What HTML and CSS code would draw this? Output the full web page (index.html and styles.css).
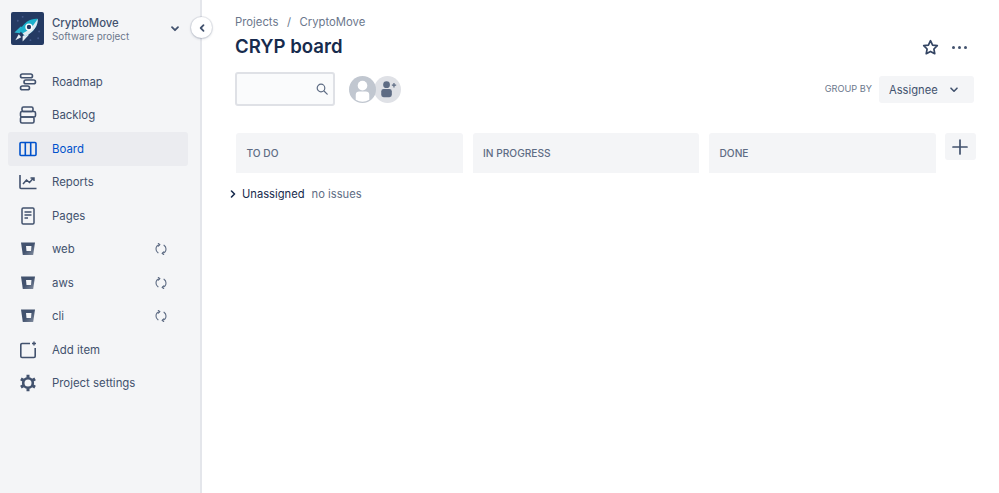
FILE: index.html
```html
<!DOCTYPE html>
<html lang="en">
<head>
  <meta charset="UTF-8" />
  <title>CRYP board</title>
  <link rel="stylesheet" href="styles.css">
</head>

<body>
  <div class="app">
    <aside class="sidebar">
      <div class="project">
        <svg class="project-logo" viewBox="0 0 34 34">
          <rect width="34" height="34" rx="2" fill="#243a63"/>
          <circle cx="7" cy="9" r="1" fill="#44598a"/>
          <circle cx="12" cy="5" r="1" fill="#44598a"/>
          <circle cx="29" cy="20" r="1" fill="#44598a"/>
          <circle cx="20" cy="29" r="1" fill="#44598a"/>
          <circle cx="28" cy="27" r="1" fill="#44598a"/>
          <path d="M3.500 21l6.500-6 3 1-4 6z" fill="#2ab4d0"/>
          <path d="M12 30.500l6-6.500-1-3-5 4z" fill="#e6eef5"/>
          <path d="M27.500 7c-7-.5-14 3-18.500 12l5.500 6c9-4 13.500-11 13-18z" fill="#1cb0cc"/>
          <path d="M27.500 7c.5 7-4 14-13 18l-2.500-3c7-3 12-9 15.500-15z" fill="#dfeaf1"/>
          <circle cx="18.500" cy="15.500" r="3" fill="#243a63" stroke="#fff" stroke-width="1.500"/>
          <path d="M8 23l-3.500 6 6-3z" fill="#e6eef5"/>
        </svg>
        <div class="project-text">
          <div class="project-name">CryptoMove</div>
          <div class="project-type">Software project</div>
        </div>
        <svg class="project-chevron" viewBox="0 0 10 8"><path d="M2 2.200l3 3 3-3" fill="none" stroke="#42526e" stroke-width="1.800" stroke-linecap="round" stroke-linejoin="round"/></svg>
      </div>

      <nav class="nav">
        <a class="nav-item">
          <svg class="nav-icon" viewBox="0 0 18 18" fill="none" stroke="#42526e" stroke-width="1.600"><rect x="1.500" y="1" width="12" height="3.800" rx="1.900"/><rect x="5" y="7" width="11.500" height="3.800" rx="1.900"/><rect x="1.500" y="13" width="9" height="3.800" rx="1.900"/></svg>
          <span>Roadmap</span>
        </a>
        <a class="nav-item">
          <svg class="nav-icon" viewBox="0 0 18 18" fill="none" stroke="#42526e" stroke-width="1.600"><rect x="3" y="1" width="11" height="4.500" rx="1.500"/><rect x="1.500" y="5.500" width="15" height="5.500" rx="1.500"/><rect x="1.500" y="11" width="13.500" height="6" rx="1.500"/></svg>
          <span>Backlog</span>
        </a>
        <a class="nav-item active">
          <svg class="nav-icon" viewBox="0 0 18 18" fill="none" stroke="#0052cc" stroke-width="1.600"><rect x="1" y="2.500" width="16" height="13" rx="1"/><path d="M6.300 2.500v13M11.700 2.500v13"/></svg>
          <span>Board</span>
        </a>
        <a class="nav-item">
          <svg class="nav-icon" viewBox="0 0 18 18" fill="none" stroke="#42526e" stroke-width="1.600"><path d="M1 2v12.500a1 1 0 0 0 1 1h15.500"/><path d="M4 11l3.500-4 3 2.500 4-4.500M11.500 5H15v3" stroke-width="1.500"/></svg>
          <span>Reports</span>
        </a>
        <a class="nav-item">
          <svg class="nav-icon" viewBox="0 0 18 18" fill="none" stroke="#42526e" stroke-width="1.500"><rect x="3" y="1" width="12" height="16" rx="1.200"/><path d="M5.500 5h7M5.500 8h7M5.500 11h3.500"/></svg>
          <span>Pages</span>
        </a>
        <a class="nav-item">
          <svg class="nav-icon" viewBox="0 0 18 18"><defs><linearGradient id="bucket" x1="0" y1="0" x2="1" y2="1"><stop offset="0.500" stop-color="#42526e"/><stop offset="1" stop-color="#8993a4"/></linearGradient></defs><path d="M2 2.500h14l-1.800 12.500H3.800z" fill="url(#bucket)"/><path d="M7 6h5.500L12 11H7.500z" fill="#f4f5f7"/></svg>
          <span class="nav-label">web</span>
          <svg class="sync-icon" viewBox="0 0 12 12" fill="none" stroke="#5e6c84" stroke-width="1.100" stroke-linecap="round" stroke-linejoin="round"><path d="M3 9.800C1.700 8.900 1 7.500 1 6c0-2.300 1.500-3.900 3.700-4.300"/><path d="M3.300.3l1.500 1.400-1.500 1.500"/><path d="M9 2.200c1.300.9 2 2.300 2 3.800 0 2.300-1.500 3.900-3.700 4.300"/><path d="M8.700 11.700l-1.500-1.400 1.500-1.500"/></svg>
        </a>
        <a class="nav-item">
          <svg class="nav-icon" viewBox="0 0 18 18"><path d="M2 2.500h14l-1.800 12.500H3.800z" fill="url(#bucket)"/><path d="M7 6h5.500L12 11H7.500z" fill="#f4f5f7"/></svg>
          <span class="nav-label">aws</span>
          <svg class="sync-icon" viewBox="0 0 12 12" fill="none" stroke="#5e6c84" stroke-width="1.100" stroke-linecap="round" stroke-linejoin="round"><path d="M3 9.800C1.700 8.900 1 7.500 1 6c0-2.300 1.500-3.900 3.700-4.300"/><path d="M3.300.3l1.500 1.400-1.500 1.500"/><path d="M9 2.200c1.300.9 2 2.300 2 3.800 0 2.300-1.500 3.900-3.700 4.300"/><path d="M8.700 11.700l-1.500-1.400 1.500-1.500"/></svg>
        </a>
        <a class="nav-item">
          <svg class="nav-icon" viewBox="0 0 18 18"><path d="M2 2.500h14l-1.800 12.500H3.800z" fill="url(#bucket)"/><path d="M7 6h5.500L12 11H7.500z" fill="#f4f5f7"/></svg>
          <span class="nav-label">cli</span>
          <svg class="sync-icon" viewBox="0 0 12 12" fill="none" stroke="#5e6c84" stroke-width="1.100" stroke-linecap="round" stroke-linejoin="round"><path d="M3 9.800C1.700 8.900 1 7.500 1 6c0-2.300 1.500-3.900 3.700-4.300"/><path d="M3.300.3l1.500 1.400-1.500 1.500"/><path d="M9 2.200c1.300.9 2 2.300 2 3.800 0 2.300-1.500 3.900-3.700 4.300"/><path d="M8.700 11.700l-1.500-1.400 1.500-1.500"/></svg>
        </a>
        <a class="nav-item">
          <svg class="nav-icon" viewBox="0 0 18 18" fill="none" stroke="#42526e" stroke-width="1.600"><path d="M11 2.500H3a1.200 1.200 0 0 0-1.200 1.200v11.600A1.200 1.200 0 0 0 3 16.500h12a1.200 1.200 0 0 0 1.200-1.200V7"/><path d="M15 .5v4M13 2.500h4" stroke-width="1.400"/></svg>
          <span>Add item</span>
        </a>
        <a class="nav-item">
          <svg class="nav-icon" viewBox="0 0 18 18" fill="none" stroke="#42526e"><circle cx="9" cy="9" r="4.800" stroke-width="2.600"/><path d="M9 .8v3M9 14.200v3M1.900 4.900l2.600 1.500M13.500 11.600l2.600 1.500M1.900 13.100l2.600-1.500M13.500 6.400l2.600-1.500" stroke-width="3"/></svg>
          <span>Project settings</span>
        </a>
      </nav>

      <button class="collapse">
        <svg viewBox="0 0 8 10" width="8" height="10"><path d="M5.500 2.200L2.700 5l2.800 2.800" fill="none" stroke="#42526e" stroke-width="1.800" stroke-linecap="round" stroke-linejoin="round"/></svg>
      </button>
    </aside>

    <main class="main">
      <div class="breadcrumbs">
        <span>Projects</span>
        <span class="crumb-sep">/</span>
        <span>CryptoMove</span>
      </div>

      <div class="title-row">
        <h1>CRYP board</h1>
        <div class="title-actions">
          <svg class="star" viewBox="0 0 18 18"><path d="M9 1.800l2.200 4.600 5 .7-3.600 3.500.9 5L9 13.200l-4.500 2.400.9-5L1.800 7.100l5-.7z" fill="none" stroke="#344563" stroke-width="1.800" stroke-linejoin="round"/></svg>
          <div class="dots"><i></i><i></i><i></i></div>
        </div>
      </div>

      <div class="toolbar">
        <div class="search">
          <svg viewBox="0 0 12 12" width="12" height="12" fill="none" stroke="#5e6c84" stroke-width="1.200"><circle cx="5" cy="5" r="3.800"/><path d="M8 8l3.200 3.200" stroke-linecap="round"/></svg>
        </div>
        <div class="avatars">
          <svg class="avatar" viewBox="0 0 28 28"><circle cx="14" cy="14" r="14" fill="#c1c7d0"/><circle cx="14" cy="10" r="5" fill="#fff"/><path d="M7 24.500V19.500c0-2 1.500-3.300 3.500-3.300h7c2 0 3.500 1.300 3.500 3.300v5a13 13 0 0 1-14 0z" fill="#fff"/></svg>
          <svg class="avatar avatar-add" viewBox="0 0 28 28"><circle cx="14" cy="14" r="14" fill="#dfe1e6"/><circle cx="13" cy="9" r="3.500" fill="#5e6c84"/><rect x="7.500" y="13.500" width="11" height="8.500" rx="2.500" fill="#5e6c84"/><path d="M18.500 9.500h4.500M20.700 7.300v4.500" stroke="#5e6c84" stroke-width="1.300"/></svg>
        </div>
        <div class="group-by">
          <span class="group-label">GROUP BY</span>
          <div class="select">
            <span>Assignee</span>
            <svg viewBox="0 0 10 8" width="10" height="8"><path d="M2 2.200l3 3 3-3" fill="none" stroke="#42526e" stroke-width="1.600" stroke-linecap="round" stroke-linejoin="round"/></svg>
          </div>
        </div>
      </div>

      <div class="columns">
        <div class="column">TO DO</div>
        <div class="column">IN PROGRESS</div>
        <div class="column">DONE</div>
        <button class="add-column">
          <svg viewBox="0 0 16 16" width="16" height="16"><path d="M8 1v14M1 8h14" stroke="#42526e" stroke-width="1.700" stroke-linecap="round"/></svg>
        </button>
      </div>

      <div class="swimlane">
        <svg viewBox="0 0 6 8" width="6" height="8"><path d="M1.500 1l3 3-3 3" fill="none" stroke="#172b4d" stroke-width="1.600" stroke-linecap="round" stroke-linejoin="round"/></svg>
        <span class="lane-name">Unassigned</span>
        <span class="lane-count">no issues</span>
      </div>
    </main>
  </div>
</body>
</html>
```

FILE: styles.css
```css
* {
  box-sizing: border-box;
  margin: 0;
  padding: 0;
  font-family: Inter, "Liberation Sans", sans-serif;
}

body {
  background-color: rgb(255, 255, 255);
  color: rgb(66, 82, 110);
  height: 100vh;
  overflow: hidden;
}

.app {
  display: flex;
  height: 493px;
}

/* sidebar */
.sidebar {
  position: relative;
  width: 202px;
  flex-shrink: 0;
  background-color: rgb(244, 245, 247);
  border-right: 2px solid rgb(228, 230, 235);
  padding: 12px 12px 0 8px;
}

.project {
  display: flex;
  align-items: center;
  padding-left: 3px;
  height: 33px;
}

.project-logo {
  width: 33px;
  height: 33px;
  flex-shrink: 0;
  margin-right: 8px;
}

.project-text {
  flex: 1;
}

.project-name {
  font-size: 11.3px;
  font-weight: 500;
  color: rgb(66, 82, 110);
  line-height: 14px;
}

.project-type {
  font-size: 9.9px;
  color: rgb(107, 119, 140);
  line-height: 12px;
}

.project-chevron {
  width: 10px;
  height: 8px;
  margin-right: 8px;
}

.nav {
  display: flex;
  flex-direction: column;
  margin-top: 20px;
}

.nav-item {
  display: flex;
  align-items: center;
  height: 33.5px;
  padding-left: 11px;
  padding-right: 21px;
  border-radius: 3px;
  font-size: 11.4px;
  color: rgb(66, 82, 110);
}

.nav-item.active {
  background-color: rgb(235, 236, 240);
  color: rgb(0, 82, 204);
}

.nav-icon {
  width: 18px;
  height: 18px;
  flex-shrink: 0;
  margin-right: 15px;
}

.nav-label {
  flex: 1;
}

.sync-icon {
  width: 12px;
  height: 12px;
}

.collapse {
  position: absolute;
  top: 17px;
  left: 191px;
  width: 21px;
  height: 21px;
  border: none;
  border-radius: 50%;
  background-color: rgb(255, 255, 255);
  box-shadow: 0 0 0 1px rgba(9, 30, 66, 0.08), 0 1px 3px rgba(9, 30, 66, 0.2);
  display: flex;
  align-items: center;
  justify-content: center;
}

/* main */
.main {
  flex: 1;
  padding: 15px 23px 0 33px;
}

.breadcrumbs {
  display: flex;
  gap: 8.5px;
  font-size: 11.3px;
  line-height: 15px;
  color: rgb(107, 119, 140);
}

.title-row {
  display: flex;
  align-items: center;
  justify-content: space-between;
  margin-top: 4px;
}

h1 {
  font-size: 18.6px;
  font-weight: 600;
  line-height: 24px;
  color: rgb(23, 43, 77);
}

.title-actions {
  display: flex;
  align-items: center;
  gap: 13px;
  margin-top: 3px;
  margin-right: 9px;
}

.star {
  width: 17px;
  height: 17px;
}

.dots {
  display: flex;
  gap: 2.5px;
}

.dots i {
  width: 3.500px;
  height: 3.500px;
  border-radius: 50%;
  background-color: rgb(66, 82, 110);
}

.toolbar {
  display: flex;
  align-items: center;
  margin-top: 14px;
}

.search {
  width: 100px;
  height: 34px;
  border: 2px solid rgb(223, 225, 230);
  border-radius: 3px;
  background-color: rgb(250, 251, 252);
  display: flex;
  align-items: center;
  justify-content: flex-end;
  padding-right: 5px;
}

.avatars {
  display: flex;
  margin-left: 14px;
}

.avatar {
  width: 27px;
  height: 27px;
}

.avatar-add {
  margin-left: -2px;
  position: relative;
  z-index: -1;
}

.group-by {
  display: flex;
  align-items: center;
  margin-left: auto;
  margin-right: 2px;
}

.group-label {
  font-size: 9.2px;
  line-height: 11px;
  margin-bottom: 2px;
  color: rgb(107, 119, 140);
  margin-right: 7px;
}

.select {
  width: 95px;
  height: 27px;
  border-radius: 3px;
  background-color: rgb(244, 245, 247);
  display: flex;
  align-items: center;
  justify-content: space-between;
  padding: 1px 15px 0 10px;
  font-size: 11.2px;
}

.columns {
  display: flex;
  gap: 10px;
  margin-top: 27px;
  margin-left: 1px;
  align-items: flex-start;
}

.column {
  width: 226.500px;
  height: 40px;
  border-radius: 3px 3px 0 0;
  background-color: rgb(244, 245, 247);
  padding-left: 10.5px;
  padding-bottom: 1px;
  display: flex;
  align-items: center;
  font-size: 10.200px;
  font-weight: 500;
  color: rgb(94, 108, 132);
}

.add-column {
  width: 31px;
  height: 27px;
  margin-left: -1px;
  border: none;
  border-radius: 3px;
  background-color: rgb(244, 245, 247);
  display: flex;
  align-items: center;
  justify-content: center;
}

.swimlane {
  display: flex;
  align-items: center;
  margin-top: 14px;
  margin-left: -5px;
  font-size: 11.200px;
}

.lane-name {
  color: rgb(23, 43, 77);
  margin-left: 6px;
  margin-right: 7px;
}

.lane-count {
  color: rgb(94, 108, 132);
}
```
